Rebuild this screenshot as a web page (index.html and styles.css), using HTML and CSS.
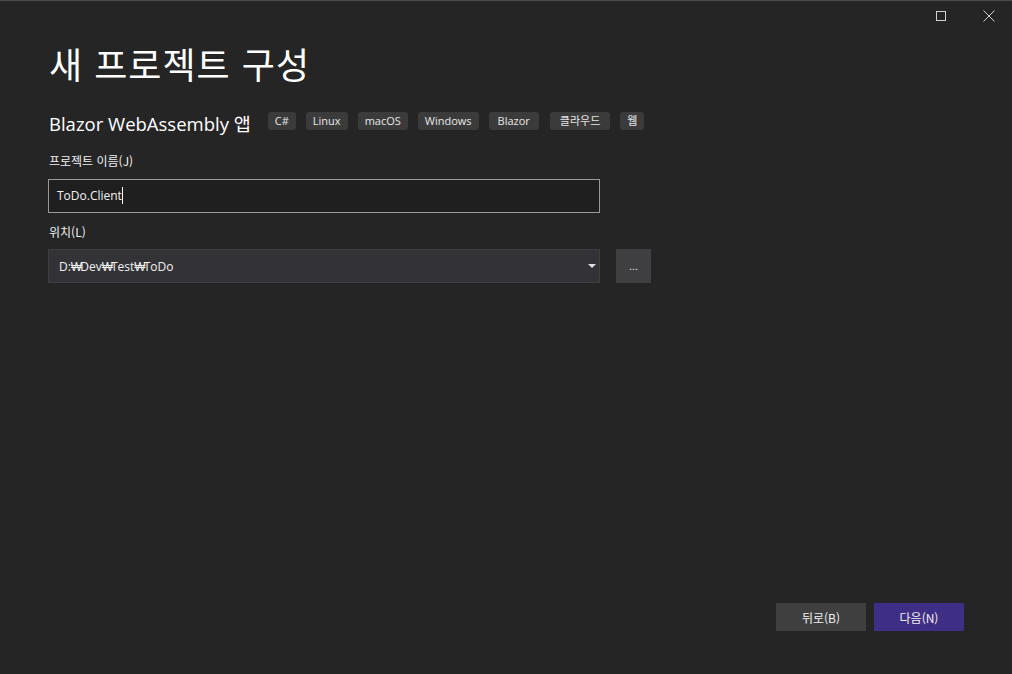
FILE: index.html
```html
<!DOCTYPE html>
<html lang="ko">
  <head>
    <meta charset="UTF-8" />
    <title>새 프로젝트 구성</title>
    <link rel="stylesheet" href="styles.css">
  </head>
  <body>
    <div class="window">
      <div class="titlebar">
        <button class="win-btn max" title="최대화">
          <svg width="12" height="12" viewBox="0 0 12 12"><rect x="1.5" y="1.5" width="9" height="9" fill="none" stroke="#d0d0d0" stroke-width="1"/></svg>
        </button>
        <button class="win-btn" title="닫기">
          <svg width="12" height="12" viewBox="0 0 12 12"><path d="M0.5 0.5 L11.5 11.5 M11.5 0.5 L0.5 11.5" stroke="#d0d0d0" stroke-width="1"/></svg>
        </button>
      </div>

      <div class="content">
        <h1>새 프로젝트 구성</h1>

        <div class="template">
          <span class="template-name">Blazor WebAssembly 앱</span>
          <div class="tags">
            <span class="tag">C#</span>
            <span class="tag">Linux</span>
            <span class="tag">macOS</span>
            <span class="tag">Windows</span>
            <span class="tag wide">Blazor</span>
            <span class="tag ko">클라우드</span>
            <span class="tag">웹</span>
          </div>
        </div>

        <!-- Project name -->
        <div class="field">
          <label for="project-name">프로젝트 이름(J)</label>
          <div class="text-input">ToDo.Client<span class="caret"></span></div>
        </div>

        <!-- Location -->
        <div class="field">
          <label>위치(L)</label>
          <div class="row">
            <div class="select">
              <span>D:<span class="won">₩</span>Dev<span class="won">₩</span>Test<span class="won">₩</span>ToDo</span>
              <svg width="8" height="5" viewBox="0 0 8 5"><path d="M0 0 L8 0 L4 4 Z" fill="#e0e0e0"/></svg>
            </div>
            <button class="browse">...</button>
          </div>
        </div>
      </div>

      <!-- Buttons -->
      <div class="footer">
        <button class="btn">뒤로(B)</button>
        <button class="btn primary">다음(N)</button>
      </div>
    </div>
  </body>
</html>
```

FILE: styles.css
```css
html, body {
  margin: 0;
  padding: 0;
  height: 100%;
}
body {
  font-family: "Noto Sans CJK KR", "Noto Sans", sans-serif;
  background-color: #252526;
  color: #f1f1f1;
}
.window {
  height: 674px;
  box-sizing: border-box;
  border-top: 1px solid #4a4a4a;
  display: flex;
  flex-direction: column;
}
.titlebar {
  display: flex;
  justify-content: flex-end;
  height: 32px;
}
.win-btn {
  width: 46px;
  height: 32px;
  background: none;
  border: none;
  padding: 0;
  display: flex;
  align-items: center;
  justify-content: center;
  margin-top: -1px;
}
.win-btn.max {
  width: 50px;
}
.content {
  padding: 0 48px;
  flex: 1;
}
h1 {
  margin: 0;
  font-size: 36px;
  font-weight: 400;
  letter-spacing: 1px;
  line-height: 56px;
  margin-top: 2px;
  margin-left: 1px;
  color: #ffffff;
}
.template {
  display: flex;
  align-items: center;
  margin-top: 15px;
  height: 30px;
}
.template-name {
  font-family: "Open Sans", "Noto Sans CJK KR", sans-serif;
  font-size: 18.5px;
  margin-left: 1px;
  margin-top: 3px;
  color: #ffffff;
}
.tags {
  display: flex;
  gap: 10px;
  margin-left: 17px;
}
.tag {
  font-family: "Open Sans", "Noto Sans CJK KR", sans-serif;
  font-size: 11px;
  background-color: #3b3b3c;
  color: #e8e8e8;
  border-radius: 3px;
  padding: 0 7px;
  height: 18px;
  line-height: 18px;
}
.tag.wide {
  padding: 0 9px;
}
.tag.ko {
  padding: 0 10px;
  margin-left: 1px;
}
.field {
  margin-top: 16px;
}
.field + .field {
  margin-top: 10px;
}
.field label {
  display: block;
  font-size: 12px;
  line-height: 18px;
  margin-left: 1px;
  margin-bottom: 9px;
  color: #f1f1f1;
}
.field + .field label {
  margin-bottom: 8px;
}
.text-input {
  height: 32px;
  border: 1px solid #9a9a9a;
  background-color: #1f1f1f;
  font-family: "Open Sans", sans-serif;
  font-size: 12px;
  line-height: 32px;
  padding-left: 8px;
  width: 542px;
}
.caret {
  display: inline-block;
  width: 1px;
  height: 17px;
  background-color: #ffffff;
  vertical-align: -4px;
}
.row {
  display: flex;
  gap: 16px;
}
.select {
  width: 552px;
  height: 34px;
  box-sizing: border-box;
  background-color: #333337;
  border: 1px solid #3f3f41;
  display: flex;
  align-items: center;
  justify-content: space-between;
  padding: 0 3px 0 10px;
  font-family: "Open Sans", sans-serif;
  font-size: 12px;
}
.won {
  letter-spacing: -2px;
}
.browse {
  width: 35px;
  height: 34px;
  background-color: #3f3f41;
  border: none;
  color: #f1f1f1;
  font-size: 11px;
  padding: 0;
}
.footer {
  display: flex;
  justify-content: flex-end;
  gap: 8px;
  padding: 0 48px 43px 0;
}
.btn {
  width: 90px;
  height: 28px;
  border: none;
  background-color: #3f3f40;
  color: #f1f1f1;
  font-family: "Noto Sans CJK KR", sans-serif;
  font-size: 12px;
  padding: 0;
}
.btn.primary {
  background-color: #3f2e85;
}
```
